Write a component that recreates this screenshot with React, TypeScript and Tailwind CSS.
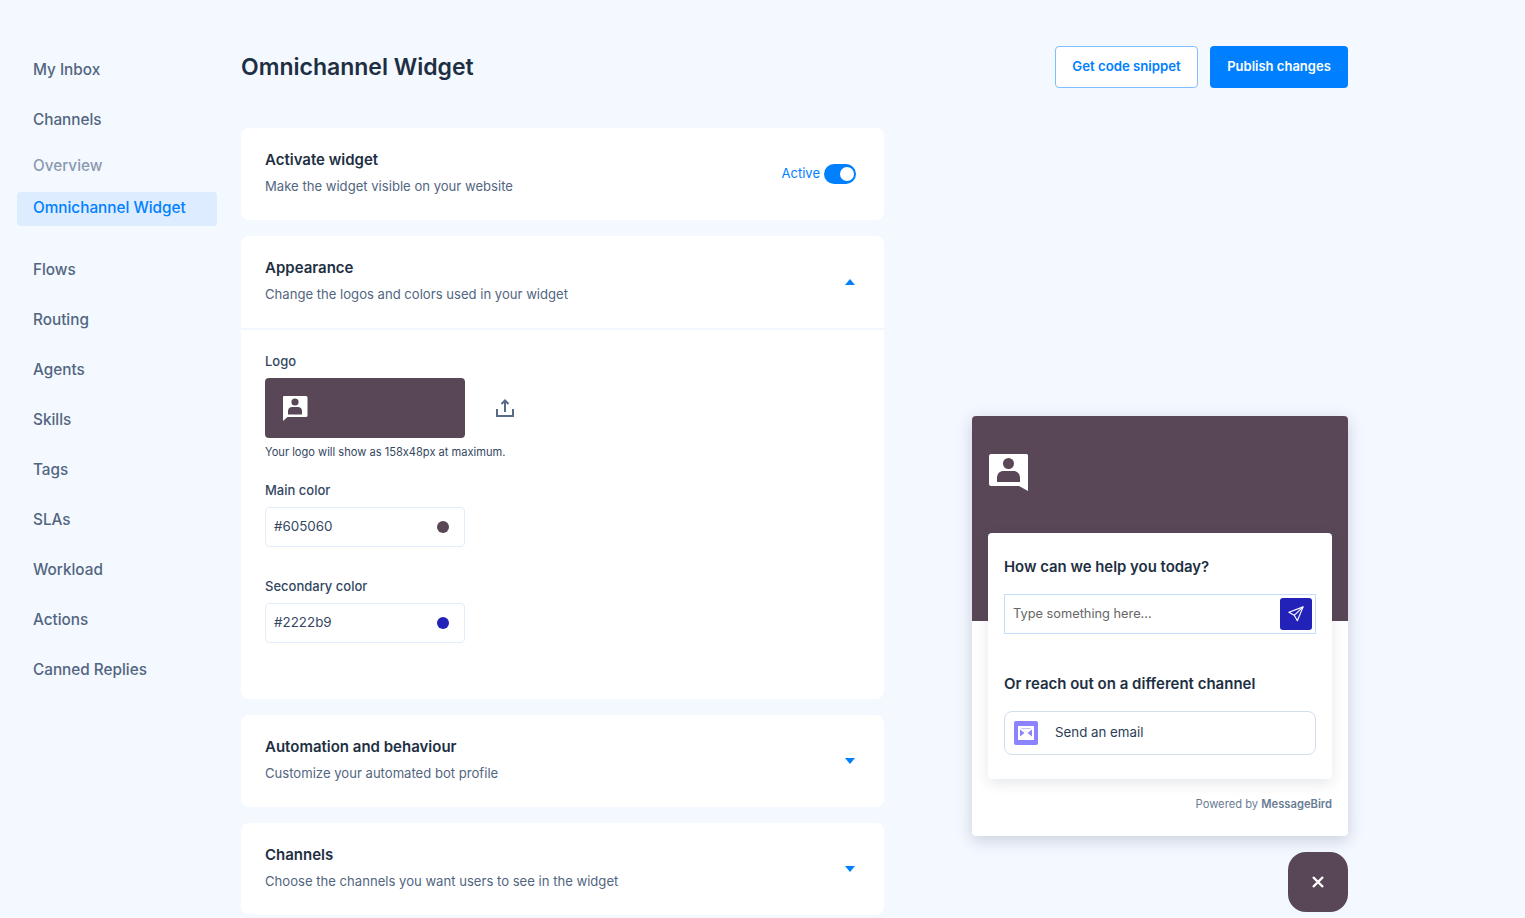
import React from "react";

const FONT = "[font-family:Inter,'Liberation_Sans',sans-serif]";

function Bubble({ className, bg }: { className: string; bg: string }) {
  return (
    <svg viewBox="0 0 39 37" className={className}>
      <path d="M2 0H37.5A1.5 1.5 0 0 1 39 1.500V37L30 32H2A2 2 0 0 1 0 30V2A2 2 0 0 1 2 0Z" fill="#fff" />
      <circle cx="19.500" cy="9.500" r="5.500" fill={bg} />
      <path d="M8 28V24C8 19.500 11 17 14.500 17H24.500C28 17 31 19.500 31 24V28Z" fill={bg} />
    </svg>
  );
}

function LogoBubble() {
  return (
    <svg viewBox="0 0 26 26" className="w-[26px] h-[26px]">
      <path d="M2 1H24A1.500 1.500 0 0 1 25.500 2.500V20.500A1.500 1.500 0 0 1 24 22H5.500L1 26V2A1.500 1.500 0 0 1 2 1Z" fill="#fff" />
      <circle cx="13" cy="7" r="3.600" fill="#594757" />
      <path d="M6 19.500V16C6 13.200 8 12 10 12H16C18 12 20 13.200 20 16V19.500Z" fill="#594757" />
    </svg>
  );
}

function Caret({ up }: { up?: boolean }) {
  return (
    <svg viewBox="0 0 10 6" className="w-[10px] h-[6px] mr-px">
      <path d={up ? "M5 0L10 6H0Z" : "M0 0H10L5 6Z"} fill="#0080ff" />
    </svg>
  );
}

function Nav({ label, cls = "h-[50px] text-[#52667f]" }: { label: string; cls?: string }) {
  return <div className={`flex items-center pl-4 text-[15.3px] font-medium ${cls}`}>{label}</div>;
}

function SectionHead({ title, sub, children }: { title: string; sub: string; children?: React.ReactNode }) {
  return (
    <div className="flex items-center justify-between h-[92px] pl-6 pr-7">
      <div className="flex flex-col gap-2 pb-[2px]">
        <div className="text-[15px] leading-[18px] font-semibold text-[#1e2f43]">{title}</div>
        <div className="text-[13.1px] leading-[18px] text-[#52667f]">{sub}</div>
      </div>
      {children}
    </div>
  );
}

function ColorField({ value, color }: { value: string; color: string }) {
  return (
    <div className="flex items-center justify-between w-[200px] h-[40px] mt-2 pl-2 pr-[15px] border border-[#e2edfb] rounded-[4px] bg-white">
      <span className="pb-[2px] text-[13.4px] text-[#33475f]">{value}</span>
      <span className="w-3 h-3 rounded-full" style={{ backgroundColor: color }} />
    </div>
  );
}

export default function App() {
  return (
    <div className={`flex h-[918px] overflow-hidden bg-[#f4f8ff] ${FONT}`}>
      <aside className="w-[200px] ml-[17px] pt-[45px] shrink-0">
        <Nav label="My Inbox" />
        <Nav label="Channels" />
        <Nav label="Overview" cls="h-[42px] text-[#8a9ab0]" />
        <Nav label="Omnichannel Widget" cls="h-[34px] mt-[5px] mb-[19px] pb-[2px] rounded-[4px] bg-[#deecff] text-[#0080ff]" />
        {["Flows", "Routing", "Agents", "Skills", "Tags", "SLAs", "Workload", "Actions", "Canned Replies"].map((l) => (
          <Nav key={l} label={l} />
        ))}
      </aside>

      <main className="w-[643px] ml-6 shrink-0">
        <h1 className="h-[128px] pt-[52px] text-[23px] leading-[30px] font-semibold text-[#1e2f43]">Omnichannel Widget</h1>
        <div className="flex flex-col gap-4">
          <section className="rounded-lg bg-white">
            <SectionHead title="Activate widget" sub="Make the widget visible on your website">
              <div className="flex items-center gap-1 text-[13px] text-[#0080ff]">
                Active
                <span className="flex items-center justify-end w-8 h-[20px] pr-[2px] rounded-full bg-[#0080ff]">
                  <span className="w-[14px] h-[14px] rounded-full bg-white" />
                </span>
              </div>
            </SectionHead>
          </section>

          <section className="h-[463px] rounded-lg bg-white">
            <SectionHead title="Appearance" sub="Change the logos and colors used in your widget">
              <Caret up />
            </SectionHead>
            <div className="border-t-2 border-[#f2f6fd] px-6 pt-[22px]">
              <div className="text-[13px] leading-[18px] font-medium text-[#33475f]">Logo</div>
              <div className="flex items-center gap-[30px] mt-[8px]">
                <div className="flex items-center w-[200px] h-[60px] pl-[17px] rounded-[4px] bg-[#594757]">
                  <LogoBubble />
                </div>
                <svg viewBox="0 0 20 20" className="w-5 h-5" fill="none" stroke="#566b85" strokeWidth="2">
                  <path d="M2 11V18H18V11" />
                  <path d="M10 14V2.500M6.500 6L10 2.500L13.500 6" />
                </svg>
              </div>
              <div className="mt-[6px] text-[11.1px] leading-[16px] text-[#33475f] [font-feature-settings:'calt'_0]">Your logo will show as 158x48px at maximum.</div>
              <div className="mt-[21px] text-[13px] leading-[18px] font-medium text-[#33475f]">Main color</div>
              <ColorField value="#605060" color="#594757" />
              <div className="mt-[30px] text-[13px] leading-[18px] font-medium text-[#33475f]">Secondary color</div>
              <ColorField value="#2222b9" color="#2222b9" />
            </div>
          </section>

          <section className="rounded-lg bg-white">
            <SectionHead title="Automation and behaviour" sub="Customize your automated bot profile">
              <Caret />
            </SectionHead>
          </section>

          <section className="rounded-lg bg-white">
            <SectionHead title="Channels" sub="Choose the channels you want users to see in the widget">
              <Caret />
            </SectionHead>
          </section>
        </div>
      </main>

      <div className="flex flex-col justify-between w-[376px] ml-[88px] pt-[46px] pb-[6px] shrink-0">
        <div className="flex justify-end gap-3">
          <button className="w-[143px] h-[42px] rounded-[4px] border border-[#80bfff] bg-white text-[13.2px] font-semibold text-[#0080ff]">Get code snippet</button>
          <button className="w-[138px] h-[42px] rounded-[4px] bg-[#0080ff] text-[13px] font-semibold text-white">Publish changes</button>
        </div>

        <div className="flex flex-col items-end gap-4">
          <div className="w-[376px] h-[420px] rounded-[4px] bg-white shadow-[0_4px_16px_rgba(40,60,90,0.22)] overflow-hidden">
            <div className="h-[205px] pl-[17px] pt-[38px] bg-[#594757]">
              <Bubble className="w-[39px] h-[37px]" bg="#594757" />
            </div>
            <div className="mx-4 -mt-[88px] h-[246px] px-4 pt-[25px] rounded-[4px] bg-white shadow-[0_4px_14px_rgba(40,60,90,0.12)] relative">
              <div className="text-[14.9px] leading-[18px] font-semibold text-[#1e2f43]">How can we help you today?</div>
              <div className="flex items-center justify-between h-[40px] mt-[18px] pl-2 pr-[3px] border border-[#c5dcfa]">
                <span className="text-[12.8px] text-[#666]">Type something here...</span>
                <span className="flex items-center justify-center w-8 h-8 rounded-[3px] bg-[#2222b9]">
                  <svg viewBox="0 0 18 18" className="w-4 h-4" fill="none" stroke="#fff" strokeWidth="1.300" strokeLinejoin="round">
                    <path d="M17 1L1 7L7 10.500L10.500 16.500Z" />
                    <path d="M17 1L7 10.500" />
                  </svg>
                </span>
              </div>
              <div className="mt-[41px] text-[15px] leading-[18px] font-semibold text-[#1e2f43]">Or reach out on a different channel</div>
              <div className="flex items-center gap-[17px] h-[44px] mt-[18px] pl-[9px] border border-[#d3deeb] rounded-[8px]">
                <span className="flex items-center justify-center w-6 h-6 rounded-[2px] bg-[#8c84ff]">
                  <svg viewBox="0 0 16 14" className="w-4 h-[14px]">
                    <path d="M0 0H16V14H0Z" fill="#fff" />
                    <path d="M2 3.500L6.500 7L2 10.500ZM14 3.500L9.500 7L14 10.500ZM3 2L8 6L13 2Z" fill="#8c84ff" />
                    <path d="M3 2.500H13L8 6.200Z" fill="#fff" />
                    <path d="M2.500 12L6.500 8.500L8 9.700L9.500 8.500L13.500 12Z" fill="#fff" />
                  </svg>
                </span>
                <span className="text-[13.3px] text-[#2a3d54]">Send an email</span>
              </div>
            </div>
            <div className="mt-[17px] pr-4 text-right text-[11.2px] leading-[16px] text-[#6a7c94]">
              Powered by <span className="font-semibold">MessageBird</span>
            </div>
          </div>
          <button className="flex items-center justify-center w-[60px] h-[60px] rounded-[18px] bg-[#594757]">
            <svg viewBox="0 0 12 12" className="w-3 h-3" fill="none" stroke="#fff" strokeWidth="2.400">
              <path d="M1 1L11 11M11 1L1 11" />
            </svg>
          </button>
        </div>
      </div>
    </div>
  );
}
